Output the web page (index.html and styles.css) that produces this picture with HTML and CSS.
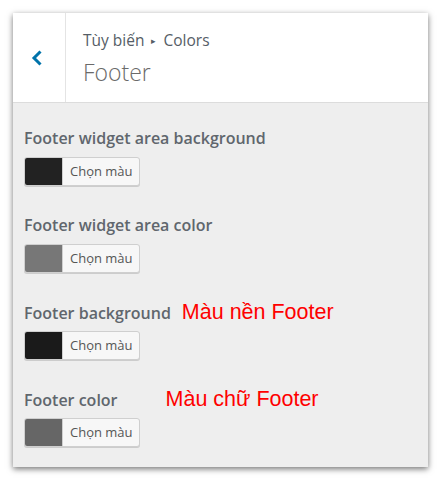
FILE: index.html
```html
<!DOCTYPE html>
<html lang="vi">
<head>
<meta charset="utf-8">
<title>Footer</title>
<link rel="stylesheet" href="styles.css">
</head>
<body>
<div class="panel">
  <div class="header">
    <div class="back">
      <svg width="14" height="18" viewBox="0 0 14 18"><path d="M10.5 2.5 L4 9 L10.5 15.5" fill="none" stroke="#0073aa" stroke-width="3"/></svg>
    </div>
    <div class="titles">
      <div class="crumb">Tùy biến <span class="tri">▸</span> Colors</div>
      <div class="title">Footer</div>
    </div>
  </div>
  <div class="content">
    <div class="control">
      <div class="label">Footer widget area background</div>
      <div class="picker"><span class="swatch s1"></span><span class="btn">Chọn màu</span></div>
    </div>
    <div class="control">
      <div class="label">Footer widget area color</div>
      <div class="picker"><span class="swatch s2"></span><span class="btn">Chọn màu</span></div>
    </div>
    <div class="control">
      <div class="label">Footer background <span class="note note1">Màu nền Footer</span></div>
      <div class="picker"><span class="swatch s3"></span><span class="btn">Chọn màu</span></div>
    </div>
    <div class="control">
      <div class="label">Footer color <span class="note note2">Màu chữ Footer</span></div>
      <div class="picker"><span class="swatch s4"></span><span class="btn">Chọn màu</span></div>
    </div>
  </div>
</div>
</body>
</html>
```
FILE: styles.css
```css
html, body {
  margin: 0;
  padding: 0;
  background: #fff;
}
body {
  padding: 13px 14px 14px 13px;
  font-family: "Open Sans", "Noto Sans", sans-serif;
}
.panel {
  width: 415px;
  height: 454px;
  background: #eeeeee;
  box-shadow: 0 2px 6px rgba(0,0,0,0.55);
  display: flex;
  flex-direction: column;
}
.header {
  display: flex;
  height: 89px;
  background: #fff;
  border-bottom: 1px solid #dcdcdc;
}
.back {
  width: 53px;
  border-right: 1px solid #e4e4e4;
  display: flex;
  align-items: center;
  justify-content: center;
  box-sizing: border-box;
}
.back svg {
  margin-right: 4px;
  margin-top: 0;
}
.titles {
  padding: 16px 0 0 17px;
  color: #555d66;
}
.crumb {
  font-size: 15.5px;
  line-height: 22px;
  color: #555d66;
}
.tri {
  font-size: 9px;
  vertical-align: 2px;
  margin: 0 3px;
}
.title {
  font-size: 23px;
  font-weight: 300;
  line-height: 30px;
  margin-top: 5px;
  color: #6a6a6a;
}
.content {
  padding: 25px 11px 0 11px;
  display: flex;
  flex-direction: column;
  gap: 29px;
}
.label {
  font-size: 16px;
  font-weight: 600;
  color: #60666d;
  line-height: 20px;
  height: 20px;
  display: flex;
  align-items: baseline;
  white-space: nowrap;
}
.note {
  font-family: "Liberation Sans", Arial, sans-serif;
  font-weight: 400;
  font-size: 21.5px;
  line-height: 20px;
  color: #ff0000;
}
.note1 { margin-left: 11px; }
.note2 { margin-left: 48px; }
.picker {
  margin-top: 9px;
  display: flex;
  width: 114px;
  height: 27px;
  border: 1px solid #cfcfcf;
  border-radius: 3px;
  box-shadow: 0 1px 0 #ccc;
  background: #f7f7f7;
  overflow: hidden;
}
.swatch {
  width: 37px;
  height: 100%;
  border-right: 1px solid #cfcfcf;
}
.s1 { background: #222222; }
.s2 { background: #777777; }
.s3 { background: #1a1a1a; }
.s4 { background: #666666; }
.btn {
  flex: 1;
  font-size: 13px;
  color: #555;
  line-height: 27px;
  padding-left: 7px;
}
```
